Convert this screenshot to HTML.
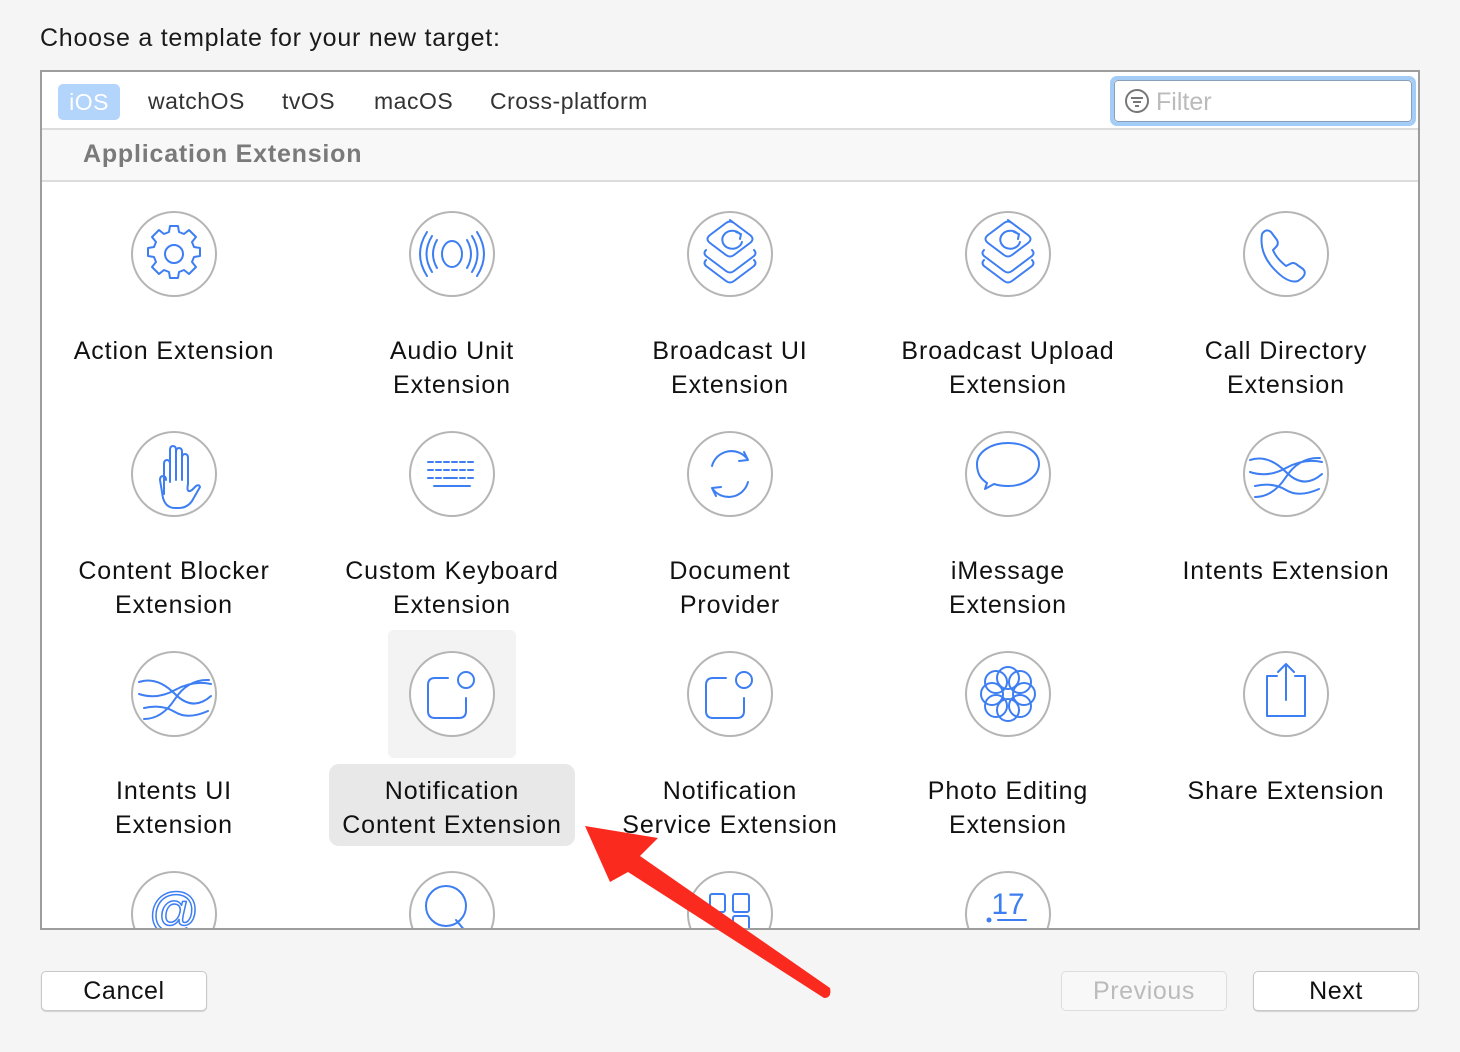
<!DOCTYPE html>
<html><head><meta charset="utf-8"><style>
*{margin:0;padding:0;box-sizing:border-box}
body{width:1460px;height:1052px;background:#f5f5f5;font-family:"Liberation Sans",sans-serif;position:relative;overflow:hidden;color:#111}
.abs{position:absolute}
.title{left:40px;top:24px;font-size:25px;letter-spacing:0.75px;color:#1a1a1a}
.panel{left:40px;top:70px;width:1380px;height:860px;border:2px solid #9d9d9d;background:#fff;overflow:hidden}
.tabs{left:0;top:0;width:1376px;height:58px;background:#fff;border-bottom:2px solid #dcdcdc}
.tab{top:11px;height:36px;font-size:23px;letter-spacing:0.5px;line-height:36px;color:#333}
.hdr{left:0;top:58px;width:1376px;height:52px;background:#f8f8f8;border-bottom:2px solid #dcdcdc}
.lab{width:276px;text-align:center;font-size:25px;letter-spacing:0.9px;line-height:34px;color:#111;white-space:nowrap}
.btn{height:40px;border:1px solid #c8c8c8;border-radius:5px;background:#fff;font-size:25px;letter-spacing:0.6px;text-align:center;line-height:38px;box-shadow:0 1px 1px rgba(0,0,0,.15)}
</style></head><body>
<div class="abs title">Choose a template for your new target:</div>
<div class="abs panel">
 <div class="abs tabs">
  <div class="abs tab" style="left:16px;width:62px;background:#b3d4fb;border-radius:5px;color:#fff;text-align:center;top:12px">iOS</div>
  <div class="abs tab" style="left:106px">watchOS</div>
  <div class="abs tab" style="left:240px">tvOS</div>
  <div class="abs tab" style="left:332px">macOS</div>
  <div class="abs tab" style="left:448px">Cross-platform</div>
  <div class="abs" style="left:1068px;top:4px;width:306px;height:50px;border:4px solid #a3cdf7;border-radius:7px;background:#fff">
   <div class="abs" style="left:0;top:0;right:0;bottom:0;border:1px solid #8a9fb8;border-radius:4px"></div>
   <svg class="abs" style="left:10px;top:8px" width="26" height="26"><circle cx="13" cy="13" r="11" fill="none" stroke="#777" stroke-width="2"/><path d="M7 10h12M9 14h8M11 18h4" stroke="#777" stroke-width="2"/></svg>
   <div class="abs" style="left:42px;top:8px;font-size:25px;color:#bbb">Filter</div>
  </div>
 </div>
 <div class="abs hdr"><div class="abs" style="left:41px;top:10px;font-size:25px;letter-spacing:0.8px;font-weight:bold;color:#7a7a7a">Application Extension</div></div>
 <div class="abs" style="left:346px;top:558px;width:128px;height:128px;background:#f3f3f3;border-radius:6px"></div>
 <div class="abs" style="left:287px;top:692px;width:246px;height:82px;background:#e8e8e8;border-radius:10px"></div>
 <svg class="abs" style="left:-42px;top:-72px" width="1460" height="1002">
  <g fill="#fff" stroke="#b5b5b5" stroke-width="2">
   <circle cx="174" cy="254" r="42"/><circle cx="452" cy="254" r="42"/><circle cx="730" cy="254" r="42"/><circle cx="1008" cy="254" r="42"/><circle cx="1286" cy="254" r="42"/>
   <circle cx="174" cy="474" r="42"/><circle cx="452" cy="474" r="42"/><circle cx="730" cy="474" r="42"/><circle cx="1008" cy="474" r="42"/><circle cx="1286" cy="474" r="42"/>
   <circle cx="174" cy="694" r="42"/><circle cx="452" cy="694" r="42"/><circle cx="730" cy="694" r="42"/><circle cx="1008" cy="694" r="42"/><circle cx="1286" cy="694" r="42"/>
   <circle cx="174" cy="914" r="42"/><circle cx="452" cy="914" r="42"/><circle cx="730" cy="914" r="42"/><circle cx="1008" cy="914" r="42"/>
  </g>
  <g fill="none" stroke="#3d7ef2" stroke-width="2" stroke-linecap="round" stroke-linejoin="round">
   <circle cx="174" cy="254" r="9"/>
   <path d="M170 226h8l1 6 5 2 5-4 7 7-4 5 2 5 6 1v8l-6 1-2 5 4 5-7 7-5-4-5 2-1 6h-8l-1-6-5-2-5 4-7-7 4-5-2-5-6-1v-8l6-1 2-5-4-5 7-7 5 4 5-2z"/>
   <ellipse cx="452" cy="254" rx="10" ry="13"/>
   <path d="M437 240q-8 14 0 28M432 236q-11 18 0 36M427 232q-14 22 0 44M467 240q8 14 0 28M472 236q11 18 0 36M477 232q14 22 0 44"/>
   <g id="bc"><path d="M730 220l20 15q5 4 0 8l-16 12q-4 3-8 0l-16-12q-5-4 0-8l16-12q4-3 8 0z"/>
   <path d="M706 250q-3 3 0 6l20 15q4 3 8 0l20-15q3-3 0-6M706 260q-3 3 0 6l20 15q4 3 8 0l20-15q3-3 0-6"/>
   <path d="M740 234a10 9 0 1 0 2 8M736 232l5 2-1 5"/></g>
   <use href="#bc" x="278"/>
   <path d="M1262 234q4-6 9-2l6 8q2 4-1 7l-3 3q3 8 13 16l4-2q3-2 6 0l7 5q4 4-1 9l-4 3q-10 3-24-12-15-16-12-35z"/>
   <path d="M164 494v-30q0-4 3-4t3 4v18M170 482v-32q0-4 3-4t3 4v30M176 480v-28q0-4 3-4t3 4v28M182 480v-22q0-4 3-4t3 4v26q-2 10 4 6l4-4q3-2 4 1l-8 14q-5 7-13 7h-4q-9 0-12-10l-3-18q0-4 3-4t3 4"/>
   <path d="M428 462h5M436 462h5M444 462h5M452 462h5M460 462h5M468 462h5M428 470h5M436 470h5M444 470h5M452 470h5M460 470h5M468 470h5M428 478h5M436 478h5M460 478h5M468 478h5M444 478h13M434 486h36"/>
   <path d="M712 466a20 20 0 0 1 36-6M748 482a20 20 0 0 1-36 6M744 452l4 8-9 1M716 496l-4-8 9-1"/>
   <path d="M1008 443c17 0 31 9 31 21s-14 22-31 22q-8 0-14-2l-9 5 2-6c-6-4-10-9-10-19 0-12 14-21 31-21z"/>
   <g id="wv"><path d="M1250 460q18-6 36 12t36 2M1250 472q18 6 36-4t36-6M1255 497q18 0 31-20t34-19M1255 486q18-4 31 4t33-1"/></g>
   <use href="#wv" x="-1111" y="222"/>
   <g id="nt"><path d="M448 678h-13q-7 0-7 7v26q0 7 7 7h24q7 0 7-7v-13"/><circle cx="466" cy="680" r="8"/></g>
   <use href="#nt" x="278"/>
   <circle cx="1008" cy="678" r="11"/><circle cx="1008" cy="710" r="11"/><circle cx="992" cy="694" r="11"/><circle cx="1024" cy="694" r="11"/>
   <circle cx="996" cy="682" r="11"/><circle cx="1020" cy="682" r="11"/><circle cx="996" cy="706" r="11"/><circle cx="1020" cy="706" r="11"/>
   <path d="M1277 676h-10v40h38v-40h-10M1286 700v-36M1278 672l8-8 8 8"/>
   <text x="174" y="928" font-size="50" fill="none" stroke="#3d7ef2" stroke-width="1.5" text-anchor="middle" font-family="Liberation Sans">@</text>
   <circle cx="446" cy="906" r="20"/><path d="M456 920l10 12"/>
   <rect x="710" y="894" width="15" height="18" rx="2"/><rect x="733" y="894" width="16" height="18" rx="2"/><rect x="733" y="916" width="16" height="18" rx="2"/>
   <path d="M998 920h28"/>
  </g>
  <circle cx="989" cy="920" r="2.5" fill="#3d7ef2"/>
  <text x="1008" y="914" font-size="30" fill="#3d7ef2" text-anchor="middle" font-family="Liberation Sans">17</text>
 </svg>
 <div class="abs lab" style="left:-6px;top:262px">Action Extension</div>
 <div class="abs lab" style="left:272px;top:262px">Audio Unit<br>Extension</div>
 <div class="abs lab" style="left:550px;top:262px">Broadcast UI<br>Extension</div>
 <div class="abs lab" style="left:828px;top:262px">Broadcast Upload<br>Extension</div>
 <div class="abs lab" style="left:1106px;top:262px">Call Directory<br>Extension</div>
 <div class="abs lab" style="left:-6px;top:482px">Content Blocker<br>Extension</div>
 <div class="abs lab" style="left:272px;top:482px">Custom Keyboard<br>Extension</div>
 <div class="abs lab" style="left:550px;top:482px">Document<br>Provider</div>
 <div class="abs lab" style="left:828px;top:482px">iMessage<br>Extension</div>
 <div class="abs lab" style="left:1106px;top:482px">Intents Extension</div>
 <div class="abs lab" style="left:-6px;top:702px">Intents UI<br>Extension</div>
 <div class="abs lab" style="left:272px;top:702px">Notification<br>Content Extension</div>
 <div class="abs lab" style="left:550px;top:702px">Notification<br>Service Extension</div>
 <div class="abs lab" style="left:828px;top:702px">Photo Editing<br>Extension</div>
 <div class="abs lab" style="left:1106px;top:702px">Share Extension</div>
</div>
<div class="abs btn" style="left:41px;top:971px;width:166px">Cancel</div>
<div class="abs btn" style="left:1061px;top:971px;width:166px;color:#bbb;background:#f8f8f8;border-color:#ddd;box-shadow:none">Previous</div>
<div class="abs btn" style="left:1253px;top:971px;width:166px">Next</div>
<svg class="abs" style="left:0;top:0" width="1460" height="1052">
 <path d="M585 826L658 838L640 856L830 988Q832 998 824 998L628 872L610 882Z" fill="#fb2a1f"/>
</svg>
</body></html>
